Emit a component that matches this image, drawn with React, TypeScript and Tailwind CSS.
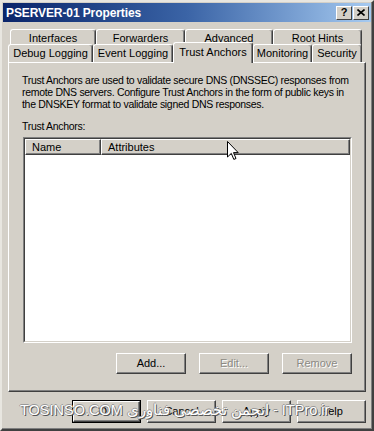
import type { ReactNode } from "react";

const font = { fontFamily: '"Liberation Sans", Arial, sans-serif' };

function Tab({ label, width, selected }: { label: string; width: number; selected?: boolean }) {
  return (
    <div
      style={{ width }}
      className={`flex items-start justify-center rounded-t-[3px] border-l border-t border-r border-l-white border-t-white border-r-[#404040] bg-[#d4d0c8] shadow-[inset_-1px_0_0_#808080] text-[11px] leading-[13px] text-black ${
        selected ? "relative z-10 -mt-[2px] h-[21px] pt-[3px]" : "h-[18px] pt-[2px]"
      }`}
    >
      {label}
    </div>
  );
}

function Button({
  children,
  width,
  height,
  disabled,
  isDefault,
}: {
  children: ReactNode;
  width: number;
  height: number;
  disabled?: boolean;
  isDefault?: boolean;
}) {
  const inner = (
    <div
      className={`flex h-full w-full items-center justify-center border border-l-white border-t-white border-r-[#404040] border-b-[#404040] bg-[#d4d0c8] shadow-[inset_-1px_-1px_0_#808080] text-[11px] ${
        disabled ? "text-[#8c8a84] [text-shadow:1px_1px_0_#ffffff]" : "text-black"
      }`}
    >
      {children}
    </div>
  );
  return (
    <div style={{ width, height }} className={isDefault ? "border border-black" : ""}>
      {inner}
    </div>
  );
}

export default function App() {
  return (
    <div style={font} className="relative h-[431px] w-[374px] overflow-hidden bg-[#d4d0c8]">
      <div className="h-[431px] w-[374px] border-[2px] border-l-[#e8e6e0] border-t-[#e8e6e0] border-r-[#404040] border-b-[#404040] p-[1px] shadow-[inset_-1px_-1px_0_#808080]">
        {/* title bar */}
        <div className="flex h-[19px] items-center justify-between bg-gradient-to-r from-[#0a246a] via-[#3b64a6] to-[#a6caf0] pl-[3px] pr-[2px]">
          <span className="text-[12px] font-bold tracking-[-0.1px] text-white">PSERVER-01 Properties</span>
          <div className="flex gap-[1px]">
            <div className="flex h-[14px] w-[16px] items-center justify-center border border-l-white border-t-white border-r-[#404040] border-b-[#404040] bg-[#d4d0c8] text-[11px] font-bold leading-none text-black">
              ?
            </div>
            <div className="flex h-[14px] w-[16px] items-center justify-center border border-l-white border-t-white border-r-[#404040] border-b-[#404040] bg-[#d4d0c8]">
              <svg width="8" height="7" viewBox="0 0 8 7">
                <path d="M0.5 0.5 L7.5 6.5 M7.5 0.5 L0.5 6.5" stroke="#000" strokeWidth="1.6" />
              </svg>
            </div>
          </div>
        </div>

        {/* tabs */}
        <div className="mt-[7px] flex pl-[7px]">
          <Tab label="Interfaces" width={86} />
          <Tab label="Forwarders" width={89} />
          <Tab label="Advanced" width={88} />
          <Tab label="Root Hints" width={89} />
        </div>
        <div className="-mt-[3px] flex pl-[5px]">
          <Tab label="Debug Logging" width={85} />
          <Tab label="Event Logging" width={80} />
          <Tab label="Trust Anchors" width={80} selected />
          <Tab label="Monitoring" width={59} />
          <Tab label="Security" width={50} />
        </div>

        {/* panel */}
        <div className="-mt-[1px] ml-[5px] h-[330px] w-[358px] border border-l-white border-t-white border-r-[#404040] border-b-[#404040] shadow-[inset_-1px_-1px_0_#808080] pl-[13px] pt-[11px]">
          <p className="whitespace-nowrap text-[10.5px] leading-[12px] tracking-[-0.3px] text-black">
            Trust Anchors are used to validate secure DNS (DNSSEC) responses from
            <br />
            remote DNS servers. Configure Trust Anchors in the form of public keys in
            <br />
            the DNSKEY format to validate signed DNS responses.
          </p>
          <div className="mt-[10px] text-[10.5px] leading-[12px] tracking-[-0.3px] text-black">Trust Anchors:</div>

          <div className="mt-[5px] ml-[1px] h-[206px] w-[329px] border border-l-[#808080] border-t-[#808080] border-r-white border-b-white">
            <div className="h-full w-full border border-l-[#404040] border-t-[#404040] border-r-[#d4d0c8] border-b-[#d4d0c8] bg-white">
              <div className="flex h-[16px] text-[11px] text-black">
                <div className="flex w-[76px] items-center border border-l-white border-t-white border-r-[#404040] border-b-[#404040] bg-[#d4d0c8] pl-[6px] shadow-[inset_-1px_-1px_0_#808080]">
                  Name
                </div>
                <div className="flex flex-1 items-center border border-l-white border-t-white border-r-[#404040] border-b-[#404040] bg-[#d4d0c8] pl-[6px] shadow-[inset_-1px_-1px_0_#808080]">
                  Attributes
                </div>
              </div>
            </div>
          </div>

          <div className="mt-[10px] flex w-[330px] justify-end gap-[13px]">
            <Button width={70} height={21}>Add...</Button>
            <Button width={70} height={21} disabled>
              Edit...
            </Button>
            <Button width={70} height={21} disabled>
              Remove
            </Button>
          </div>
        </div>

        {/* dialog buttons */}
        <div className="mt-[8px] flex w-[363px] justify-end gap-[6px]">
          <Button width={69} height={23} isDefault>
            OK
          </Button>
          <Button width={69} height={23}>Cancel</Button>
          <Button width={69} height={23}>Apply</Button>
          <Button width={69} height={23}>Help</Button>
        </div>
      </div>

      {/* mouse cursor */}
      <svg className="absolute left-[227px] top-[141px]" width="12" height="20" viewBox="0 0 12 20">
        <path d="M0.5 0.5 L0.5 16 L4.3 12.4 L6.8 18.4 L9 17.5 L6.5 11.6 L11.2 11.6 Z" fill="#fff" stroke="#000" strokeWidth="1" />
      </svg>

      {/* watermark */}
      <div
        className="absolute left-[20px] top-[400px] whitespace-nowrap text-[14.5px] leading-[20px] text-white [text-shadow:1px_1px_0_#555,-1px_0_0_#999,0_-1px_0_#999]"
        style={{ fontFamily: '"Liberation Sans", "Noto Sans", sans-serif' }}
      >
        TOSINSO.COM انجمن تخصصی فناوری - ITPro.ir
      </div>
    </div>
  );
}
